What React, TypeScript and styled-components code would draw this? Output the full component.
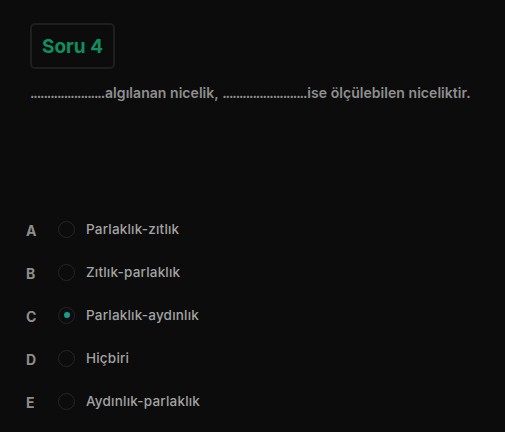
import React, { useState } from "react";
import styled, { createGlobalStyle } from "styled-components";

const GlobalStyle = createGlobalStyle`
  html, body {
    margin: 0;
    background: #0c0c0c;
    font-family: "Inter", "Open Sans", sans-serif;
  }
`;

const Page = styled.div`
  width: 505px;
  height: 432px;
  box-sizing: border-box;
  padding: 23px 30px 0 30px;
  background: #0c0c0c;
`;

const Badge = styled.div`
  display: inline-flex;
  align-items: center;
  height: 46px;
  box-sizing: border-box;
  padding: 0 10px;
  border: 2px solid #1f1f1f;
  border-radius: 5px;
  color: #0d8f5f;
  font-size: 19px;
  font-weight: 700;
`;

const Question = styled.p`
  margin: 15px 0 0 0;
  color: #8f8f8f;
  font-size: 14px;
  font-weight: 600;
  letter-spacing: 0.05px;
  white-space: nowrap;
`;

const Blank = styled.span`
  letter-spacing: -1.1px;
  margin-right: 1px;
`;

const Options = styled.div`
  margin-top: 119px;
  margin-left: -4px;
  display: flex;
  flex-direction: column;
  gap: 25px;
`;

const Option = styled.label`
  display: flex;
  align-items: center;
  height: 18px;
  cursor: pointer;
`;

const Letter = styled.span`
  width: 32px;
  color: #8e8e8e;
  font-size: 14px;
  font-weight: 700;
  margin-top: 3px;
`;

const Radio = styled.span<{ $checked: boolean }>`
  width: 17px;
  height: 17px;
  box-sizing: border-box;
  border: 1px solid #262626;
  border-radius: 50%;
  display: flex;
  align-items: center;
  justify-content: center;
  margin-right: 11px;

  &::after {
    content: "";
    width: 6px;
    height: 6px;
    border-radius: 50%;
    background: #139e91;
    display: ${(p) => (p.$checked ? "block" : "none")};
  }
`;

const Label = styled.span`
  color: #a3a3a3;
  font-size: 13.5px;
  font-weight: 500;
  letter-spacing: 0.2px;
  margin-top: -1px;
`;

const choices = [
  { key: "A", text: "Parlaklık-zıtlık" },
  { key: "B", text: "Zıtlık-parlaklık" },
  { key: "C", text: "Parlaklık-aydınlık" },
  { key: "D", text: "Hiçbiri" },
  { key: "E", text: "Aydınlık-parlaklık" },
];

export default function App() {
  const [selected, setSelected] = useState("C");

  return (
    <Page>
      <GlobalStyle />
      <Badge>Soru 4</Badge>
      <Question>
        <Blank>......................</Blank>algılanan nicelik,{" "}
        <Blank>.........................</Blank>ise ölçülebilen niceliktir.
      </Question>
      <Options>
        {choices.map((c) => (
          <Option key={c.key} onClick={() => setSelected(c.key)}>
            <Letter>{c.key}</Letter>
            <Radio $checked={selected === c.key} />
            <Label>{c.text}</Label>
          </Option>
        ))}
      </Options>
    </Page>
  );
}
